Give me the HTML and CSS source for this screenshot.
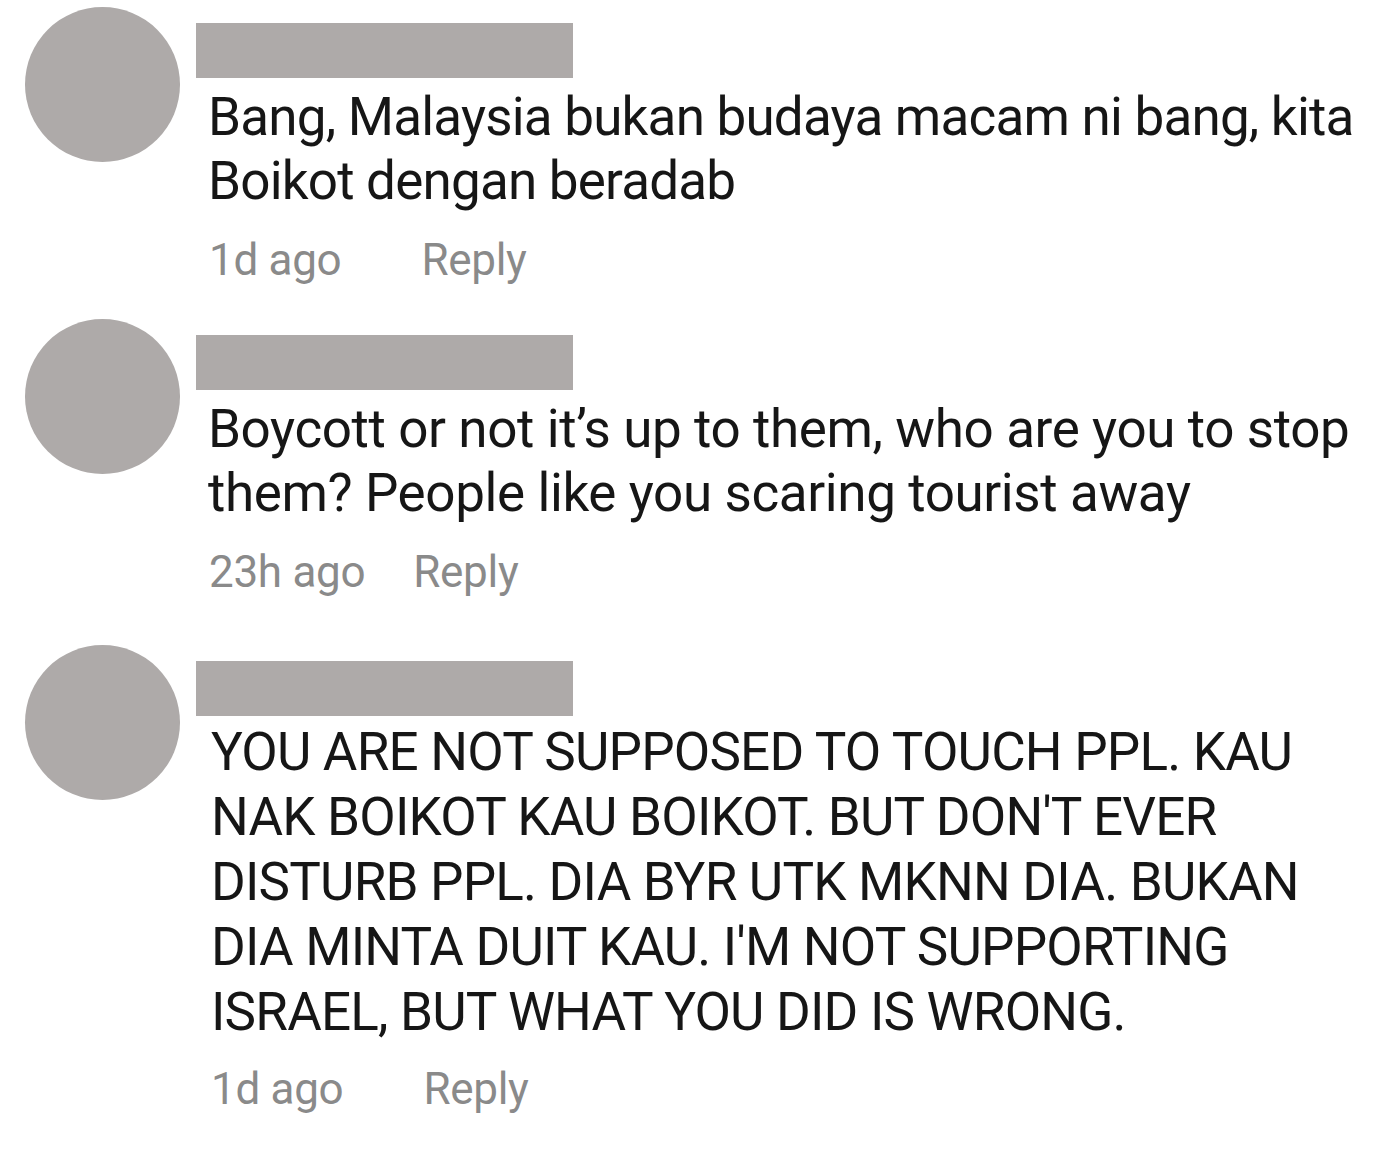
FILE: index.html
```html
<!DOCTYPE html>
<html lang="en">
<head>
<meta charset="utf-8">
<title>Comments</title>
<link rel="stylesheet" href="styles.css">
</head>
<body>
<div class="comments">
  <div class="comment c1">
    <div class="avatar"></div>
    <div class="body">
      <div class="name"></div>
      <p class="text">Bang, Malaysia bukan budaya macam ni bang, kita Boikot dengan beradab</p>
      <div class="meta"><span class="time">1d ago</span><span class="reply r-wide">Reply</span></div>
    </div>
  </div>
  <div class="comment c2">
    <div class="avatar"></div>
    <div class="body">
      <div class="name"></div>
      <p class="text">Boycott or not it’s up to them, who are you to stop them? People like you scaring tourist away</p>
      <div class="meta"><span class="time">23h ago</span><span class="reply">Reply</span></div>
    </div>
  </div>
  <div class="comment c3">
    <div class="avatar"></div>
    <div class="body">
      <div class="name"></div>
      <p class="text caps">YOU ARE NOT SUPPOSED TO TOUCH PPL. KAU NAK BOIKOT KAU BOIKOT. BUT DON'T EVER DISTURB PPL. DIA BYR UTK MKNN DIA. BUKAN DIA MINTA DUIT KAU. I'M NOT SUPPORTING ISRAEL, BUT WHAT YOU DID IS WRONG.</p>
      <div class="meta"><span class="time">1d ago</span><span class="reply r-wide">Reply</span></div>
    </div>
  </div>
</div>
</body>
</html>
```

FILE: styles.css
```css
html, body {
  margin: 0;
  padding: 0;
  background: #ffffff;
}

body {
  font-family: Roboto, "Liberation Sans", Arial, sans-serif;
  color: #161616;
}

.comments {
  padding: 7px 0 0 25px;
}

.comment {
  display: flex;
  align-items: flex-start;
  gap: 16px;
}

.c2 {
  margin-top: 34px;
}

.c3 {
  margin-top: 48px;
}

.avatar {
  flex: none;
  width: 155px;
  height: 155px;
  border-radius: 50%;
  background: #aeaaa9;
}

.body {
  padding-top: 16px;
  width: 1180px;
}

.name {
  width: 377px;
  height: 55px;
  background: #aeaaa9;
}

.text {
  margin: 7px 0 0;
  padding-left: 12px;
  font-size: 53px;
  line-height: 64px;
  letter-spacing: -0.8px;
}

.c2 .text {
  letter-spacing: -0.4px;
}

.text.caps {
  margin-top: 4px;
  padding-left: 15px;
  line-height: 65px;
  width: 1100px;
}

.meta {
  margin-top: 22px;
  padding-left: 13px;
  font-size: 44px;
  line-height: 50px;
  letter-spacing: -0.3px;
  color: #8a8a8a;
  display: flex;
}

.c3 .meta {
  margin-top: 19px;
  padding-left: 15px;
}

.time {
  margin-right: 48px;
}

.reply.r-wide {
  margin-left: 32px;
}
```
